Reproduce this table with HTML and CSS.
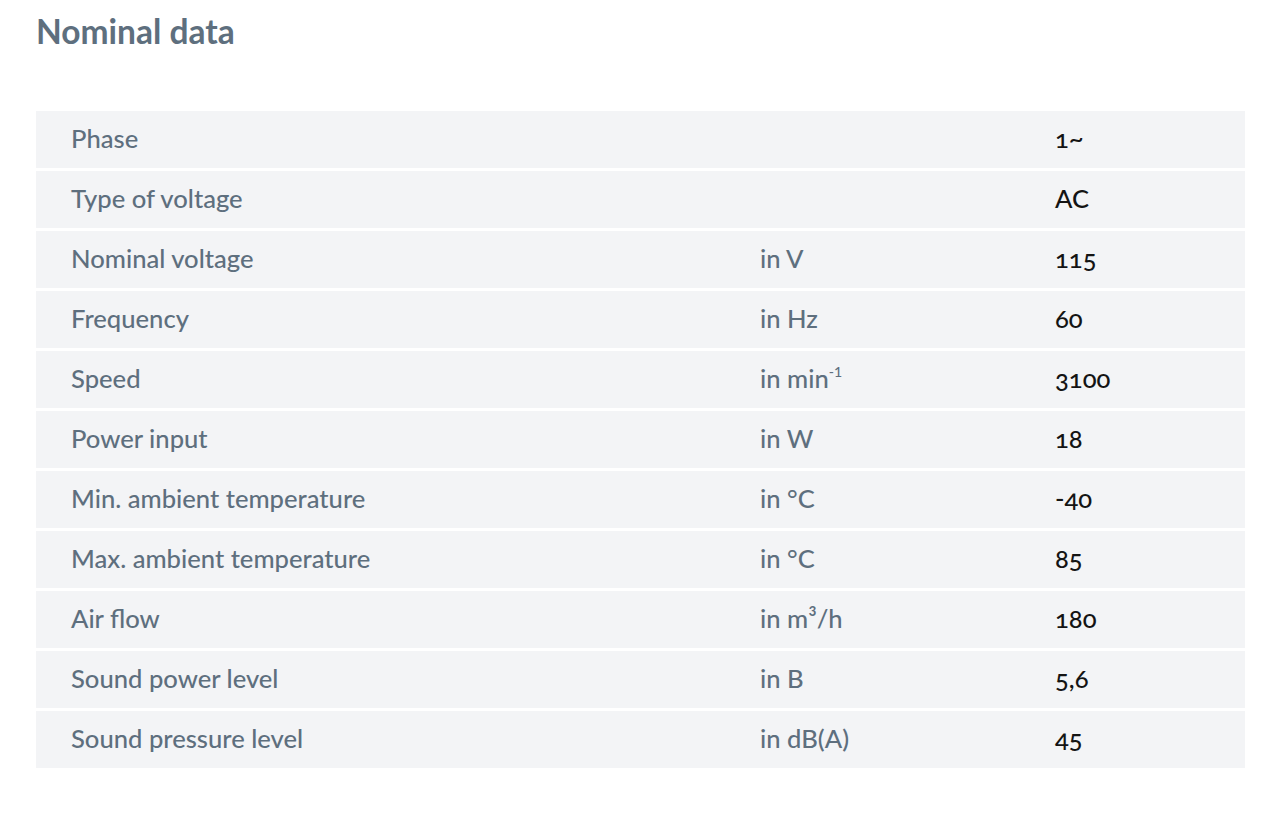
FILE: index.html
```html
<!DOCTYPE html>
<html lang="en">
<head>
<meta charset="utf-8">
<title>Nominal data</title>
<link rel="stylesheet" href="styles.css">
</head>
<body>
<main class="page">
  <h1 class="title">Nominal data</h1>
  <div class="specs">
    <div class="row"><span class="label">Phase</span><span class="unit"></span><span class="value">1~</span></div>
    <div class="row"><span class="label">Type of voltage</span><span class="unit"></span><span class="value">AC</span></div>
    <div class="row"><span class="label">Nominal voltage</span><span class="unit">in V</span><span class="value">115</span></div>
    <div class="row"><span class="label">Frequency</span><span class="unit">in Hz</span><span class="value">60</span></div>
    <div class="row"><span class="label">Speed</span><span class="unit">in min<sup class="sup">-1</sup></span><span class="value">3100</span></div>
    <div class="row"><span class="label">Power input</span><span class="unit">in W</span><span class="value">18</span></div>
    <div class="row"><span class="label">Min. ambient temperature</span><span class="unit">in °C</span><span class="value">-40</span></div>
    <div class="row"><span class="label">Max. ambient temperature</span><span class="unit">in °C</span><span class="value">85</span></div>
    <div class="row"><span class="label">Air flow</span><span class="unit">in m³/h</span><span class="value">180</span></div>
    <div class="row"><span class="label">Sound power level</span><span class="unit">in B</span><span class="value">5,6</span></div>
    <div class="row"><span class="label">Sound pressure level</span><span class="unit">in dB(A)</span><span class="value">45</span></div>
  </div>
</main>
</body>
</html>
```

FILE: styles.css
```css
html, body {
  margin: 0;
  padding: 0;
  background: #ffffff;
}

.page {
  padding: 11px 35px 0 36px;
  font-family: Lato, "Noto Sans", sans-serif;
}

.title {
  margin: 0;
  font-size: 33.5px;
  line-height: 40px;
  font-weight: 700;
  color: #5e6f7e;
}

.specs {
  margin-top: 60px;
  display: flex;
  flex-direction: column;
  gap: 3px;
}

.row {
  height: 57px;
  box-sizing: border-box;
  padding-bottom: 4px;
  display: grid;
  grid-template-columns: 689px 295px 1fr;
  align-items: center;
  padding-left: 35px;
  background: #f3f4f6;
  font-size: 25.6px;
  font-weight: 500;
}

.label,
.unit {
  color: #5e6f7e;
}

.value {
  color: #141414;
  font-variant-numeric: oldstyle-nums;
}

.sup {
  font-size: 0.55em;
  vertical-align: 0.75em;
  line-height: 0;
}
```
